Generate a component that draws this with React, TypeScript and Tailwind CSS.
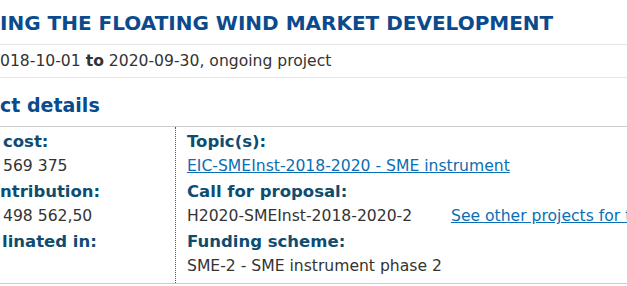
import React from "react";

const font = { fontFamily: '"DejaVu Sans", Verdana, sans-serif' };

export default function App() {
  return (
    <div className="w-[627px] h-[286px] overflow-hidden bg-white text-[#333]" style={font}>
      <h1 className="whitespace-nowrap pt-[11px] pb-[9px] text-[20px] leading-[24px] font-bold text-[#0b4a8c] border-b border-[#e6e6e6]">
        ING THE FLOATING WIND MARKET DEVELOPMENT
      </h1>
      <div className="whitespace-nowrap pt-[6px] pb-[6px] text-[15.6px] leading-[20px] border-b border-[#e6e6e6]">
        018-10-01 <b>to</b> 2020-09-30, ongoing project
      </div>
      <h2 className="whitespace-nowrap pt-[15px] pb-[9px] text-[19px] leading-[24px] font-bold text-[#0b4a8c] border-b border-[#cccccc]">
        ct details
      </h2>
      <div className="grid grid-cols-[176px_1fr] border-b border-[#cccccc]">
        <div className="border-r border-dotted border-[#555] pt-[2px] pb-[4px] pl-[3px] leading-[25px] whitespace-nowrap overflow-hidden">
          <div className="text-[16.5px] font-bold text-[#0e4d72]">cost:</div>
          <div className="text-[15.6px]">569 375</div>
          <div className="text-[16.5px] font-bold text-[#0e4d72] -ml-[3px]">ntribution:</div>
          <div className="text-[15.6px]">498 562,50</div>
          <div className="text-[16.5px] font-bold text-[#0e4d72] -ml-[1px]">linated in:</div>
          <div className="text-[15.6px]">&nbsp;</div>
        </div>
        <div className="pt-[2px] pb-[4px] pl-[11px] leading-[25px] whitespace-nowrap overflow-hidden">
          <div className="text-[16.5px] font-bold text-[#0e4d72]">Topic(s):</div>
          <div className="text-[15.6px]">
            <a href="#" className="text-[#0a6eb4] underline">EIC-SMEInst-2018-2020 - SME instrument</a>
          </div>
          <div className="text-[16.5px] font-bold text-[#0e4d72]">Call for proposal:</div>
          <div className="text-[15.6px] flex">
            <span className="w-[264px] shrink-0">H2020-SMEInst-2018-2020-2</span>
            <a href="#" className="text-[#0a6eb4] underline">See other projects for this call</a>
          </div>
          <div className="text-[16.5px] font-bold text-[#0e4d72]">Funding scheme:</div>
          <div className="text-[15.6px]">SME-2 - SME instrument phase 2</div>
        </div>
      </div>
    </div>
  );
}
